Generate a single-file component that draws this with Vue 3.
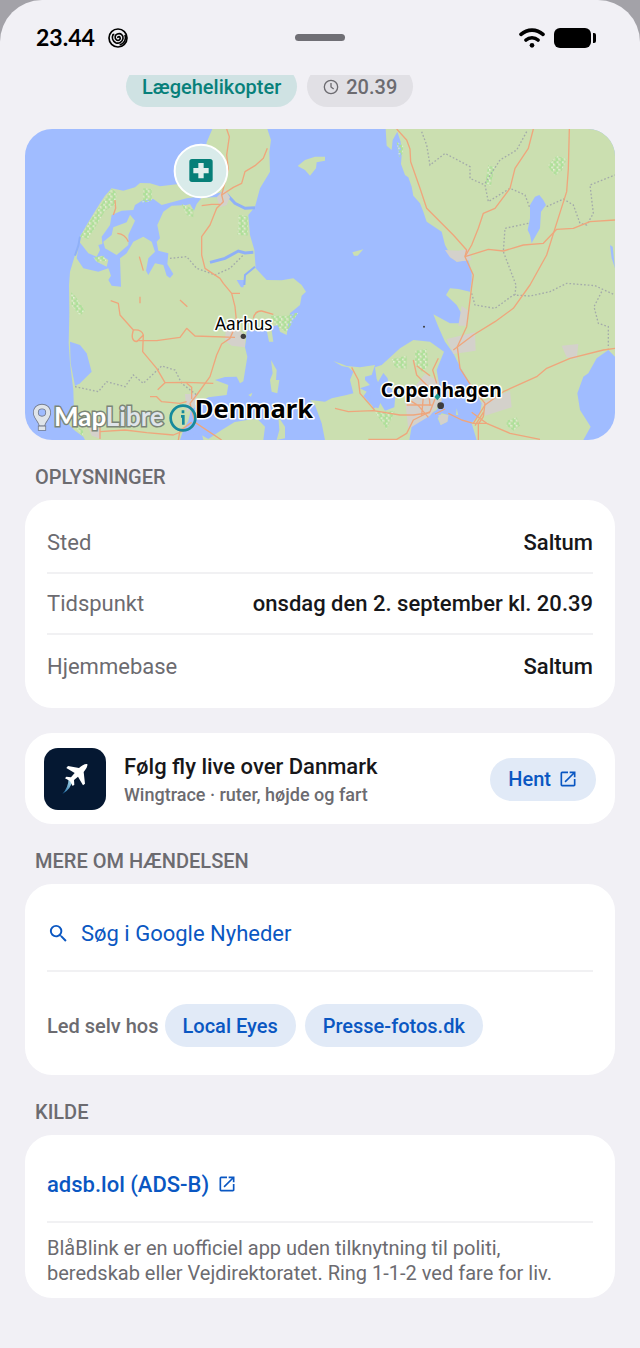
<template>
  <div class="sheet">
    <header class="status-bar">
      <div class="status-left">
        <span class="clock">23.44</span>
        <svg viewBox="0 0 60 60" class="swirl-icon">
          <circle cx="30" cy="30" r="27" />
          <path d="M30 30c-2-4 4-6 6-2 3 6-4 11-10 8-7-4-6-15 2-18 10-4 19 4 17 14-2 11-13 16-22 12-9-5-12-15-8-24l4-1" />
          <path d="M51 20c5 14-2 27-16 31" />
        </svg>
      </div>
      <span class="drag-handle"></span>
      <div class="status-right">
        <svg viewBox="0 0 78 60" class="wifi-icon">
          <path d="M6 19c19-17 47-17 66 0M21 36c10-9 26-9 36 0" />
          <circle cx="39" cy="52" r="7" />
        </svg>
        <span class="battery"></span>
      </div>
    </header>

    <main class="content">
      <div class="chips">
        <span class="chip chip-type">Lægehelikopter</span>
        <span class="chip chip-time">
          <svg viewBox="0 0 24 24" class="clock-icon">
            <circle cx="12" cy="12" r="10" />
            <path d="M12 6v6l4 3" />
          </svg>
          20.39
        </span>
      </div>

      <div class="map">
        <svg viewBox="0 0 1770 933" class="map-canvas">
          <defs>
            <pattern id="forest" width="16" height="16" patternUnits="userSpaceOnUse">
              <path class="forest-base" d="M2 0h10v7H2zM8 8h8v8H8z" />
              <path class="forest-dot" d="M0 8h4v4H0zM11 1h4v4h-4z" />
            </pattern>
          </defs>
          <rect class="water" width="1770" height="933" />

          <path v-for="(d, i) in land" :key="'l' + i" :d="d" class="land" />
          <path v-for="(d, i) in lakes" :key="'w' + i" :d="d" class="water" />
          <path v-for="(d, i) in islets" :key="'i' + i" :d="d" class="land" />
          <path class="fjord" d="M555 400L600 388 640 366 660 372 685 370M590 190L605 196 630 223 660 238 690 236" />
          <path class="fjord thin" d="M658 468L660 438 690 413M165 323L160 350 150 380" />
          <path v-for="(d, i) in urban" :key="'u' + i" :d="d" class="urban" />
          <path v-for="(d, i) in forests" :key="'f' + i" :d="d" fill="url(#forest)" />
          <path v-for="(d, i) in borders" :key="'b' + i" :d="d" class="border" />
          <path v-for="(d, i) in roads" :key="'r' + i" :d="d" class="road" />

          <circle class="city-dot" cx="655" cy="622" r="8" />
          <text class="place" x="570" y="603">Aarhus</text>
          <text class="place country" x="509" y="866">Denmark</text>
          <text class="place capital" x="1067" y="803">Copenhagen</text>
          <circle class="city-dot" cx="1247" cy="830" r="10" />
          <path class="base-dot" d="M1237 793l9 11-9 10-9-10z" />
          <circle class="city-dot" cx="1197" cy="593" r="3" />

          <circle class="marker" cx="528" cy="126" r="79" />
          <rect class="marker-box" x="493" y="90" width="70" height="69" rx="8" />
          <path class="marker-cross" d="M520 102h16v15h15v16h-15v15h-16v-15h-15v-16h15z" />
        </svg>
        <div class="attribution">
          <a href="#" class="maplibre">
            <svg viewBox="0 0 60 88" class="pin-icon">
              <path d="M30 5C13 5 5 17 5 29c0 16 14 25 18 40h14c4-15 18-24 18-40C55 17 47 5 30 5z" />
              <circle class="pin-hole" cx="30" cy="29" r="10" />
              <path d="M20 71h20v11H20z" />
            </svg>
            <span>Map<span class="libre">Libre</span></span>
          </a>
          <button class="info-button" aria-label="Info">
            <svg viewBox="0 0 84 84">
              <circle cx="42" cy="42" r="37" />
              <path d="M36 37h7v25M42 19v9" />
            </svg>
          </button>
        </div>
      </div>

      <h2 class="section-title">OPLYSNINGER</h2>
      <dl class="card details">
        <div v-for="row in details" :key="row.label" class="row">
          <dt>{{ row.label }}</dt>
          <dd>{{ row.value }}</dd>
        </div>
      </dl>

      <section class="card promo">
        <svg viewBox="0 0 186 186" class="app-icon">
          <defs>
            <linearGradient id="trail" x1="0" y1="1" x2="1" y2="0">
              <stop offset="0" stop-color="#0d5f9c" />
              <stop offset="1" stop-color="#c9f1fa" />
            </linearGradient>
          </defs>
          <rect width="186" height="186" rx="42" fill="#051832" />
          <path d="M55 138Q73 119 74 91L86 96Q81 124 55 138z" fill="url(#trail)" />
          <path d="M130 48c-7-2-17 5-25 12L72 54l-5 6 25 15-11 13-14-2-4 5 15 8 8 15 5-4-1-14 12-10 15 26 6-5-4-35c7-8 13-17 11-26z" fill="#fff" />
        </svg>
        <div class="promo-text">
          <h3>Følg fly live over Danmark</h3>
          <p>Wingtrace · ruter, højde og fart</p>
        </div>
        <a href="#" class="pill">
          Hent
          <svg viewBox="0 0 24 24" class="open-icon"><path :d="openIcon" /></svg>
        </a>
      </section>

      <h2 class="section-title">MERE OM HÆNDELSEN</h2>
      <section class="card">
        <a href="#" class="row link-row">
          <svg viewBox="0 0 24 24" class="search-icon">
            <path d="M15.5 14h-.79l-.28-.27A6.47 6.47 0 0 0 16 9.5 6.5 6.5 0 1 0 9.5 16c1.61 0 3.09-.59 4.23-1.57l.27.28v.79l5 4.99L20.49 19l-4.99-5zm-6 0C7.01 14 5 11.99 5 9.5S7.01 5 9.5 5 14 7.01 14 9.5 11.99 14 9.5 14z" />
          </svg>
          Søg i Google Nyheder
        </a>
        <div class="outlets">
          <span>Led selv hos</span>
          <a v-for="name in outlets" :key="name" href="#" class="pill">{{ name }}</a>
        </div>
      </section>

      <h2 class="section-title">KILDE</h2>
      <section class="card">
        <div class="row link-row">
          <a href="#" class="source-link">
            adsb.lol (ADS-B)
            <svg viewBox="0 0 24 24" class="open-icon"><path :d="openIcon" /></svg>
          </a>
        </div>
        <p class="disclaimer">
          BlåBlink er en uofficiel app uden tilknytning til politi, beredskab eller Vejdirektoratet. Ring 1-1-2 ved fare for liv.
        </p>
      </section>
    </main>
  </div>
</template>

<script setup>
const details = [
  { label: 'Sted', value: 'Saltum' },
  { label: 'Tidspunkt', value: 'onsdag den 2. september kl. 20.39' },
  { label: 'Hjemmebase', value: 'Saltum' }
]

const outlets = ['Local Eyes', 'Presse-fotos.dk']

const openIcon = 'M19 19H5V5h7V3H5a2 2 0 0 0-2 2v14a2 2 0 0 0 2 2h14c1.1 0 2-.9 2-2v-7h-2v7zM14 3v2h3.59l-9.83 9.83 1.41 1.41L19 6.41V10h2V3h-7z'

const land = [
  // Jutland
  'M562 0L545 40 535 110 500 165 455 166 405 172 375 163 345 162 330 175 295 185 260 178 240 200 225 223 205 255 185 288 165 323 163 343 150 378 135 428 132 468 133 553 131 643 135 703 145 783 147 853 130 885 150 905 175 923 180 933H465L475 903 490 875 500 835 550 805 605 798 610 768 570 753 600 744 635 743 645 763 655 757 667 683 660 655 663 633 665 603 700 605 725 603 732 638 745 638 740 605 735 593 760 588 765 608 785 618 795 553 825 528 830 500 843 488 830 468 805 448 770 454 725 453 692 418 688 363 675 318 670 258 690 233 705 178 735 128 733 70 738 33 727 0z',
  // Funen
  'M535 933L530 913 565 903 600 880 635 878 695 868 720 893 715 933z',
  // Zealand
  'M925 696L950 705 965 711 1005 715 1050 708 1040 738 1020 743 1020 753 1035 768 1005 778 1025 788 1015 802 1045 833 1060 838 1075 798 1055 750 1050 715 1070 708 1125 658 1165 633 1215 638 1257 668 1235 723 1240 753 1250 813 1235 843 1200 863 1160 893 1153 933H900L890 883 870 828 855 813 900 818 920 808 965 798 985 793 975 753 985 728 970 715 950 711z',
  // Sweden
  'M1082 0L1085 50 1100 63 1103 33 1117 8 1127 38 1130 78 1128 105 1140 138 1150 145 1160 173 1165 200 1185 223 1195 248 1205 278 1250 308 1260 348 1275 375 1295 398 1330 393 1340 428 1340 453 1335 488 1300 480 1275 478 1263 498 1295 528 1315 563 1310 583 1275 583 1225 556 1240 593 1260 638 1285 673 1305 713 1335 763 1370 823 1365 853 1340 883 1355 933H1675L1697 893 1665 843 1657 793 1675 743 1690 733 1715 688 1750 663 1770 683V0z',
  'M818 111L840 93 870 83 900 83 900 95 875 100 873 118 855 140 840 123z',
  'M982 370L1015 361 998 380 987 380z',
  'M738 693L755 723 753 753 763 753 757 793 740 788 735 753 743 733z',
  'M670 798L682 791 678 803z',
  'M760 863L780 893 780 928 755 933 763 903z',
  'M1250 853L1270 858 1267 878 1247 888 1238 868z',
  'M1295 838L1300 858 1293 858z'
]

const lakes = [
  'M163 338L190 373 215 383 225 363 220 348 232 345 230 323 255 288 260 258 290 245 325 243 330 228 355 213 385 210 410 228 485 208 545 200 590 190 580 204 530 206 515 225 507 245 495 225 485 228 440 230 415 248 397 288 405 328 395 338 400 365 430 373 427 405 445 435 435 447 425 440 415 408 390 403 370 438 363 425 370 388 390 368 380 338 355 323 325 338 305 373 285 388 288 473 260 470 250 453 258 440 250 418 220 428 175 418 155 388z',
  'M135 638L165 648 185 673 200 728 165 763 150 771 137 703z',
  'M1530 203L1543 198 1555 213 1563 228 1548 248 1545 298 1525 333 1520 343 1515 318 1508 303 1515 268 1515 228z',
  'M1755 348L1763 353 1770 418 1760 388z',
  'M1075 732L1098 760 1112 790 1108 835 1080 845 1066 822 1045 840 1035 800z',
  'M480 913L520 890 585 873 640 872 590 903 550 930 520 913 485 925z',
  'M635 453L660 453 655 475 648 475z',
  'M0 0h5L0 10z'
]

const islets = [
  'M265 295L305 280 315 257 330 275 310 318 310 348 275 378 240 358 235 338 260 318z',
  'M207 388L230 380 250 393 245 413 215 398z',
  'M1085 720L1105 740 1105 790 1090 765z'
]

const urban = [
  'M575 205L600 180 615 205 605 228 585 235z',
  'M1260 363L1300 365 1330 360 1340 393 1295 398 1275 385z',
  'M603 590L640 600 660 620 660 655 620 650 600 635z',
  'M1310 530L1330 545 1325 590 1300 590z',
  'M1265 630L1350 610 1352 665 1285 675z',
  'M1610 650L1660 645 1655 690 1625 685z',
  'M1140 810L1200 735 1240 755 1250 815 1215 860 1150 900z',
  'M1240 858L1270 858 1267 878 1247 888z',
  'M1370 820L1455 785 1460 835 1380 860z',
  'M480 795L515 795 510 835 485 850z',
  'M188 890L225 900 228 930 200 920z'
]

const forests = [
  'M260 180L275 190 272 225 240 245 190 330 165 323 205 260z',
  'M355 178L380 180 380 215 352 222z',
  'M470 225L505 240 505 265 485 258z',
  'M640 258L668 262 668 320 638 318z',
  'M1390 108L1408 115 1398 170 1380 165z',
  'M1568 110L1595 80 1625 90 1610 125 1590 140z',
  'M1115 38L1135 50 1132 75 1122 85z',
  'M138 490L150 500 180 545 165 560 140 530z',
  'M735 560L785 560 820 550 785 610 755 590z',
  'M1100 690L1145 680 1145 720 1110 715z',
  'M1170 665L1205 660 1210 710 1190 730 1170 700z',
  'M1050 850L1110 845 1085 900z',
  'M1445 875L1475 865 1485 890 1465 905 1445 890z',
  'M145 885L175 905 172 922z',
  'M205 385L235 380 245 395 215 398z'
]

const roads = [
  'M605 0L613 23 605 78 610 120 590 198',
  'M727 58L715 88 690 110 660 128 650 163 625 175 590 198 595 218 575 238 555 288 530 323 530 378 540 418 585 448 595 463 620 493 630 533 635 583 615 628 590 645 575 678 555 743 515 798 495 823 510 880 590 933',
  'M530 230L560 226 585 226M270 213L272 238 265 258M277 313Q300 315 310 338M343 383L355 425',
  'M257 515L280 523 285 558 325 603Q350 600 355 618L335 638Q315 635 325 603M355 618L353 668 395 718 420 761 485 760 565 763',
  'M335 635H395L465 625 485 598 510 621 630 625M398 782L420 761',
  'M375 803L395 803 410 818 465 823 485 818M225 908L300 903 365 911 445 918 505 893M225 870V930M460 933L465 905 500 880',
  'M465 513L487 533M345 503V523M485 763L500 775 500 810M620 493L645 493',
  'M685 568Q690 545 710 546L745 556',
  'M930 838L970 848 1045 845 1125 858 1165 858 1215 851M980 715L1000 753 1005 793 1050 845',
  'M1165 693L1175 738 1210 773 1215 830M1240 688L1223 723 1235 763M1175 710L1215 740',
  'M1030 931H1115L1145 913 1165 873 1215 848 1230 810M1145 828H1220M1195 803L1190 860M1145 808L1180 830 1210 865',
  'M1270 853L1310 873 1345 883 1385 883M1260 840L1230 855',
  'M1115 0L1145 33 1155 60 1157 98 1185 178 1205 238 1285 318 1325 363 1320 383 1345 438 1340 473 1325 593 1297 653 1305 718 1340 773 1380 823 1375 863 1360 885V933',
  'M1525 0L1510 58 1470 118 1455 178 1410 238 1375 253 1360 298 1340 348 1320 383',
  'M1633 0L1630 120 1625 188 1590 298 1565 378 1515 468 1465 538 1410 578 1345 618 1285 663',
  'M1320 383L1390 361 1435 366 1495 348 1555 343 1595 301 1645 298 1695 278 1770 273',
  'M1345 883L1380 828 1435 788 1535 743 1565 718 1635 688 1735 663 1770 658',
  'M1340 850L1385 883 1455 913 1545 931M1375 850L1350 890'
]

const borders = [
  'M1190 8L1205 48 1215 108 1260 73 1335 113V148L1380 168 1390 218 1455 178 1500 198 1515 238',
  'M1505 8L1475 63 1425 93 1380 163',
  'M1565 233L1615 210 1645 228 1665 283 1685 288 1705 253 1695 168 1770 138',
  'M1510 283L1440 298 1435 368 1473 468 1470 498',
  'M1340 493L1350 528 1410 538 1465 498 1515 501 1575 488 1625 463 1710 470 1770 498',
  'M1730 488L1707 533 1720 583 1750 593V658',
  'M435 388L485 383 515 418 570 438 615 418 655 378',
  'M150 773L220 788 245 758 300 773 325 738 355 763 410 711 450 723 470 763 515 798'
]
</script>

<style>
body {
  margin: 0;
  background: #a3a2a8;
}
</style>

<style scoped>
.sheet {
  min-height: 100vh;
  background: #f1f0f5;
  border-radius: 42px 42px 0 0;
  font-family: Roboto, "Noto Sans", sans-serif;
  color: #17171a;
}

.status-bar {
  display: grid;
  grid-template-columns: 1fr auto 1fr;
  align-items: center;
  height: 75px;
}
.status-left {
  display: flex;
  align-items: center;
  gap: 13px;
  padding-left: 36px;
}
.clock {
  padding-bottom: 2px;
  font-family: Lato, Roboto, sans-serif;
  font-size: 23px;
  font-weight: 700;
  color: #000;
}
.swirl-icon {
  width: 20px;
  height: 20px;
  fill: none;
  stroke: #000;
  stroke-width: 5;
}
.drag-handle {
  width: 50px;
  height: 7px;
  border-radius: 4px;
  background: #706f75;
}
.status-right {
  display: flex;
  align-items: center;
  justify-content: flex-end;
  gap: 9px;
  padding-right: 49px;
}
.wifi-icon {
  width: 26px;
  height: 20px;
  fill: #000;
}
.wifi-icon path {
  fill: none;
  stroke: #000;
  stroke-width: 11;
  stroke-linecap: round;
}
.battery {
  position: relative;
  width: 37px;
  height: 20px;
  border-radius: 6px;
  background: #000;
}
.battery::after {
  content: "";
  position: absolute;
  left: 39px;
  top: 5px;
  width: 3px;
  height: 10px;
  border-radius: 0 2px 2px 0;
  background: #000;
}

.content {
  padding: 0 25px 50px;
}

/* scrolled partly under the status bar */
.chips {
  display: flex;
  align-items: flex-end;
  gap: 10px;
  height: 32px;
  padding-left: 101px;
  margin-bottom: 22px;
  overflow: hidden;
}
.chip {
  display: flex;
  align-items: center;
  gap: 7px;
  height: 41px;
  padding: 0 16px;
  border-radius: 21px;
  font-size: 20px;
  font-weight: 500;
}
.chip-type {
  background: #cfe2e3;
  color: #07807a;
}
.chip-time {
  background: #e1e0e5;
  color: #6c6b70;
}
.clock-icon {
  width: 16px;
  height: 16px;
  fill: none;
  stroke: #6c6b70;
  stroke-width: 2;
}

.map {
  position: relative;
  border-radius: 27px;
  overflow: hidden;
}
.map-canvas {
  display: block;
  width: 100%;
}
.water { fill: #a0bcff; }
.land { fill: #cbdfb0; }
.urban { fill: #d4d1cb; }
.forest-base { fill: #aee09a; }
.forest-dot { fill: #e4f6dc; }
.fjord {
  fill: none;
  stroke: #8fb0f7;
  stroke-width: 9;
}
.fjord.thin { stroke-width: 6; }
.road {
  fill: none;
  stroke: #efa67c;
  stroke-width: 4;
  stroke-linejoin: round;
}
.border {
  fill: none;
  stroke: #a3aaaa;
  stroke-width: 4;
  stroke-dasharray: 5 6;
}
.city-dot { fill: #3c3c3c; }
.base-dot { fill: #1f978d; }
.place {
  font-family: "Noto Sans", sans-serif;
  font-size: 52px;
  fill: #000;
  stroke: #fff;
  stroke-width: 9;
  stroke-linejoin: round;
  paint-order: stroke;
}
.country {
  font-size: 77px;
  font-weight: 700;
}
.capital {
  font-size: 58px;
  font-weight: 700;
}
.marker {
  fill: #d9ebea;
  stroke: #fff;
  stroke-width: 6;
}
.marker-box { fill: #067f78; }
.marker-cross { fill: #e0efed; }

.attribution {
  position: absolute;
  left: 7px;
  bottom: 8px;
  display: flex;
  align-items: center;
  gap: 5px;
}
.maplibre {
  display: flex;
  align-items: flex-start;
  gap: 2px;
  font-family: Lato, sans-serif;
  font-size: 26px;
  line-height: 26px;
  font-weight: 700;
  color: #fff;
  -webkit-text-stroke: 3px #7b8578;
  paint-order: stroke fill;
  text-decoration: none;
}
.libre { color: #dfe4ea; }
.pin-icon {
  width: 20px;
  height: 29px;
  fill: #dfe4ea;
  stroke: #71798a;
  stroke-width: 5;
}
.pin-hole { fill: #a0bcff; }
.info-button {
  width: 28px;
  height: 28px;
  padding: 0;
  border: 0;
  background: none;
}
.info-button svg {
  display: block;
  fill: none;
  stroke: #168a9c;
  stroke-width: 8;
}

.section-title {
  margin: 0;
  padding: 25px 10px 11px;
  font-size: 20px;
  line-height: 24px;
  font-weight: 500;
  color: #6c6b70;
}

.card {
  margin: 0;
  padding: 12px 22px;
  border-radius: 27px;
  background: #fff;
}
.details {
  padding: 13px 22px 11px;
}
.row {
  display: flex;
  align-items: center;
  justify-content: space-between;
  min-height: 59px;
  border-bottom: 2px solid #f1f1f3;
  font-size: 22px;
}
.row:last-child {
  min-height: 62px;
  border-bottom: 0;
}
dt { color: #6c6b70; }
dd {
  margin: 0;
  font-weight: 500;
}

.promo {
  display: flex;
  align-items: center;
  gap: 18px;
  margin-top: 25px;
  padding: 15px 19px 14px;
}
.app-icon {
  width: 62px;
  height: 62px;
}
.promo-text {
  flex: 1;
  padding-top: 2px;
}
.promo-text h3 {
  margin: 0;
  font-size: 22px;
  line-height: 30px;
  font-weight: 500;
}
.promo-text p {
  margin: 0;
  font-size: 18px;
  line-height: 26px;
  font-weight: 500;
  color: #6c6b70;
}

.pill {
  display: flex;
  align-items: center;
  gap: 7px;
  height: 43px;
  padding: 0 18px;
  border-radius: 22px;
  background: #e1eaf7;
  color: #0a57c2;
  font-size: 20px;
  font-weight: 500;
  text-decoration: none;
}
.pill + .pill {
  margin-left: 3px;
}
.open-icon {
  width: 20px;
  height: 20px;
  fill: #0a57c2;
}

.link-row {
  justify-content: flex-start;
  gap: 11px;
  min-height: 74px;
  color: #0a57c2;
  text-decoration: none;
}
.search-icon {
  width: 23px;
  height: 23px;
  fill: #0a57c2;
}
.outlets {
  display: flex;
  align-items: center;
  gap: 6px;
  padding: 32px 0 16px;
  font-size: 20px;
  font-weight: 500;
  color: #6c6b70;
}
.source-link {
  display: flex;
  align-items: center;
  gap: 8px;
  font-weight: 500;
  color: #0a57c2;
  text-decoration: none;
}
.disclaimer {
  margin: 0;
  padding-top: 13px;
  font-size: 20px;
  line-height: 25px;
  color: #6c6b70;
}
</style>
